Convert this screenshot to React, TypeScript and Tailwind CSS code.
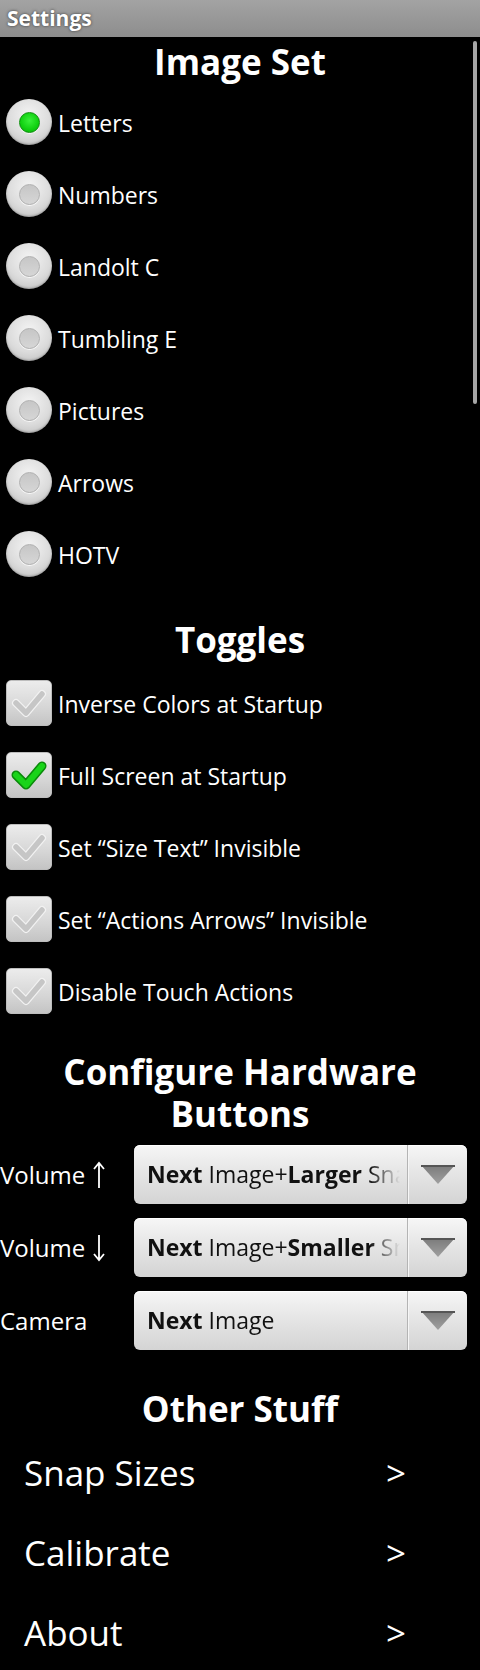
import React from "react";

const font = "font-['Open_Sans','Noto_Sans','DejaVu_Sans',sans-serif]";

function Radio({ checked }: { checked: boolean }) {
  return (
    <div className="relative w-[46px] h-[46px] rounded-full bg-[radial-gradient(circle_at_50%_35%,#f4f4f4,#dcdcdc_55%,#b9b9b9)] shadow-[inset_0_-1px_2px_rgba(0,0,0,0.25)] flex items-center justify-center shrink-0">
      {checked ? (
        <div className="w-[21px] h-[21px] rounded-full bg-[radial-gradient(circle_at_50%_40%,#3af03a,#10d010_60%,#0aa80a)] border border-[#0b8f0b] shadow-[0_1px_0_rgba(255,255,255,0.7)]" />
      ) : (
        <div className="w-[21px] h-[21px] rounded-full bg-[linear-gradient(to_bottom,#c6c6c6,#d6d6d6)] border border-[#b0b0b0] shadow-[0_1px_0_rgba(255,255,255,0.8)]" />
      )}
    </div>
  );
}

function Check({ checked }: { checked: boolean }) {
  return (
    <div className="w-[46px] h-[46px] rounded-[5px] bg-[linear-gradient(to_bottom,#ececec,#d6d6d6_60%,#c4c4c4)] border border-[#bdbdbd] shrink-0">
      <svg width="44" height="44" viewBox="0 0 44 44">
        {checked ? (
          <>
            <polyline points="9,22 19,32 35,13" fill="none" stroke="#0a8a0a" strokeWidth="9" strokeLinecap="round" strokeLinejoin="round" />
            <polyline points="9,22 19,32 35,13" fill="none" stroke="#19d419" strokeWidth="6" strokeLinecap="round" strokeLinejoin="round" />
          </>
        ) : (
          <>
            <polyline points="9,22 19,32 35,13" fill="none" stroke="#f2f2f2" strokeWidth="8" strokeLinecap="round" strokeLinejoin="round" />
            <polyline points="9,22 19,32 35,13" fill="none" stroke="#c6c6c6" strokeWidth="5.5" strokeLinecap="round" strokeLinejoin="round" />
          </>
        )}
      </svg>
    </div>
  );
}

function Heading({ children, className = "" }: { children: React.ReactNode; className?: string }) {
  return (
    <div className={`text-center text-white font-bold text-[35px] leading-[49px] ${className}`}>{children}</div>
  );
}

function Spinner({ children }: { children: React.ReactNode }) {
  return (
    <div className="w-[333px] h-[59px] rounded-[6px] bg-[linear-gradient(to_bottom,#f6f6f6,#e6e6e6_45%,#d4d4d4)] shadow-[inset_0_1px_0_#ffffff] flex items-stretch">
      <div className="w-[273px] flex items-center pl-[13px] overflow-hidden">
        <div className="whitespace-nowrap text-[23px] text-[#111111] w-[253px] overflow-hidden [mask-image:linear-gradient(to_right,black_88%,transparent)]">
          {children}
        </div>
      </div>
      <div className="w-px bg-[#b4b4b4]" />
      <div className="w-px bg-[#f6f6f6]" />
      <div className="flex-1 flex items-center justify-center">
        <svg width="34" height="19" viewBox="0 0 34 19">
          <defs>
            <linearGradient id="tri" x1="0" y1="0" x2="0" y2="1">
              <stop offset="0" stopColor="#7a7a7a" />
              <stop offset="1" stopColor="#a0a0a0" />
            </linearGradient>
          </defs>
          <polygon points="0,0 34,0 17,19" fill="url(#tri)" />
          <rect x="0" y="0" width="34" height="2" fill="#555555" />
        </svg>
      </div>
    </div>
  );
}

function Arrow({ up }: { up: boolean }) {
  return (
    <svg width="12" height="28" viewBox="0 0 12 28" className="ml-[8px] inline-block">
      {up ? (
        <path d="M6 2 V27 M1 8 L6 2 L11 8" fill="none" stroke="#ffffff" strokeWidth="1.8" />
      ) : (
        <path d="M6 1 V26 M1 20 L6 26 L11 20" fill="none" stroke="#ffffff" strokeWidth="1.8" />
      )}
    </svg>
  );
}

export default function App() {
  const radios = ["Letters", "Numbers", "Landolt C", "Tumbling E", "Pictures", "Arrows", "HOTV"];
  const toggles: [string, boolean][] = [
    ["Inverse Colors at Startup", false],
    ["Full Screen at Startup", true],
    ["Set \u201cSize Text\u201d Invisible", false],
    ["Set \u201cActions Arrows\u201d Invisible", false],
    ["Disable Touch Actions", false],
  ];
  return (
    <div className={`relative w-[480px] h-[1670px] overflow-hidden bg-black ${font}`}>
      <div className="h-[37px] bg-[linear-gradient(to_bottom,#a3a3a3,#8d8d8d)] flex items-center pl-[7px]">
        <span className="text-white font-bold text-[21px] [text-shadow:0_0_3px_#333]">Settings</span>
      </div>

      <Heading>Image Set</Heading>
      <div>
        {radios.map((r, i) => (
          <div key={r} className="h-[72px] flex items-center pl-[6px]">
            <Radio checked={i === 0} />
            <span className="ml-[6px] pt-[3px] text-white text-[23px]">{r}</span>
          </div>
        ))}
      </div>

      <Heading className="mt-[25px] mb-[3px]">Toggles</Heading>
      <div>
        {toggles.map(([t, c]) => (
          <div key={t} className="h-[72px] flex items-center pl-[6px]">
            <Check checked={c} />
            <span className="ml-[6px] pt-[3px] text-white text-[23px]">{t}</span>
          </div>
        ))}
      </div>

      <div className="mt-[24px] text-center text-white font-bold text-[35px] leading-[42px]">
        <div>Configure Hardware</div>
        <div>Buttons</div>
      </div>

      <div className="mt-[10px] flex flex-col gap-[14px]">
        <div className="flex items-center">
          <div className="w-[134px] flex items-center text-white text-[24px]">
            <span>Volume</span>
            <Arrow up={true} />
          </div>
          <Spinner>
            <b>Next</b> Image+<b>Larger</b> Snap
          </Spinner>
        </div>
        <div className="flex items-center">
          <div className="w-[134px] flex items-center text-white text-[24px]">
            <span>Volume</span>
            <Arrow up={false} />
          </div>
          <Spinner>
            <b>Next</b> Image+<b>Smaller</b> Snap
          </Spinner>
        </div>
        <div className="flex items-center">
          <div className="w-[134px] text-white text-[24px]">Camera</div>
          <Spinner>
            <b>Next</b> Image
          </Spinner>
        </div>
      </div>

      <Heading className="mt-[34px]">Other Stuff</Heading>
      <div>
        {["Snap Sizes", "Calibrate", "About"].map((s) => (
          <div key={s} className="h-[80px] flex items-center pl-[24px] text-white text-[35px] leading-[80px]">
            <span className="w-[362px]">{s}</span>
            <span>&gt;</span>
          </div>
        ))}
      </div>

      <div className="absolute right-[3px] top-[41px] w-[4px] h-[363px] rounded-full bg-[#a6a6a6]" />
    </div>
  );
}
